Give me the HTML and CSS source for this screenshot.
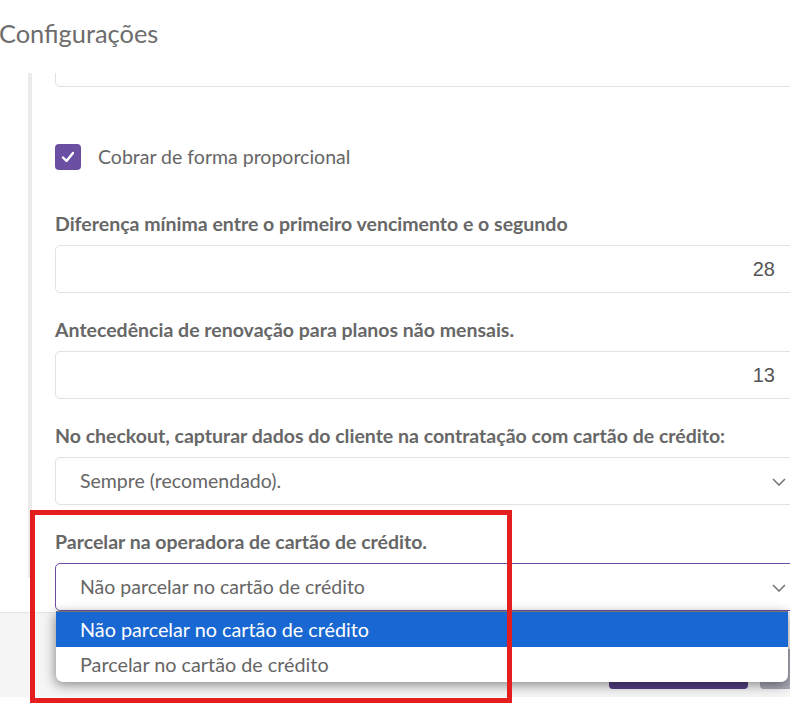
FILE: index.html
```html
<!DOCTYPE html>
<html lang="pt-BR">
<head>
    <meta charset="UTF-8">
    <meta name="viewport" content="width=device-width, initial-scale=1.0">
    <title>Configurações</title>
    <link rel="stylesheet" href="styles.css">
</head>
<body>
    <div id="header">
        <h2>Configurações</h2>
    </div>

    <div id="scroll-area">
        <div id="panel">
            <div class="field field-cut">
                <div class="input"></div>
            </div>

            <label class="check-row">
                <span class="checkbox">
                    <svg width="14" height="12" viewBox="0 0 14 12"><path d="M2 6.5 L5.5 10 L12 2" fill="none" stroke="#fff" stroke-width="2.4" stroke-linecap="round" stroke-linejoin="round"/></svg>
                </span>
                Cobrar de forma proporcional
            </label>

            <div class="field">
                <div class="label">Diferença mínima entre o primeiro vencimento e o segundo</div>
                <div class="input input-number">28</div>
            </div>

            <div class="field">
                <div class="label">Antecedência de renovação para planos não mensais.</div>
                <div class="input input-number">13</div>
            </div>

            <div class="field">
                <div class="label">No checkout, capturar dados do cliente na contratação com cartão de crédito:</div>
                <div class="input select">
                    Sempre (recomendado).
                    <svg class="chevron" width="14" height="8" viewBox="0 0 14 8"><path d="M1 1 L7 7 L13 1" fill="none" stroke="#777" stroke-width="1.6"/></svg>
                </div>
            </div>

            <div class="field">
                <div class="label">Parcelar na operadora de cartão de crédito.</div>
                <div class="input select focused">
                    Não parcelar no cartão de crédito
                    <svg class="chevron" width="14" height="8" viewBox="0 0 14 8"><path d="M1 1 L7 7 L13 1" fill="none" stroke="#777" stroke-width="1.6"/></svg>
                </div>
            </div>
        </div>
    </div>

    <div id="footer">
        <span class="btn btn-primary"></span>
        <span class="btn btn-gray"></span>
    </div>

    <!-- lista aberta do select -->
    <div id="dropdown">
        <div class="option selected">Não parcelar no cartão de crédito</div>
        <div class="option">Parcelar no cartão de crédito</div>
    </div>

    <!-- destaque vermelho -->
    <div id="highlight"></div>
</body>
</html>
```

FILE: styles.css
```css
body {
    margin: 0;
    padding: 0;
    background: #fff;
    font-family: Lato, "Open Sans", sans-serif;
    color: #666;
    width: 790px;
    height: 703px;
    overflow: hidden;
    position: relative;
}
#header {
    height: 73px;
    box-sizing: border-box;
    padding-top: 18px;
}
#header h2 {
    margin: 0 0 0 -1px;
    font-size: 25.4px;
    font-weight: 400;
    line-height: 31px;
    color: #6d6d6d;
}
#scroll-area {
    height: 539px;
    overflow: hidden;
    padding-left: 28px;
}
#panel {
    border-left: 4px solid #ebebeb;
    padding-left: 23px;
    width: 747px;
    height: 100%;
}
.field {
    margin-bottom: 26px;
}
.field-cut {
    margin-top: -34px;
    margin-bottom: 57px;
}
.label {
    font-size: 19.5px;
    font-weight: 700;
    line-height: 22px;
    margin-bottom: 10px;
    color: #676767;
    white-space: nowrap;
}
.input {
    height: 48px;
    box-sizing: border-box;
    border: 1px solid #e2e2e2;
    border-radius: 5px;
    background: #fff;
    font-size: 19.5px;
    line-height: 46px;
    padding: 0 24px;
    color: #666;
    position: relative;
    white-space: nowrap;
}
.input-number {
    text-align: right;
    padding-right: 26px;
    font-family: "Liberation Sans", Arial, sans-serif;
    font-size: 20px;
    color: #555;
}
.select .chevron {
    position: absolute;
    right: 15px;
    top: 20px;
}
.focused {
    border-color: #6b4fa5;
}
.check-row {
    display: flex;
    align-items: center;
    gap: 17px;
    font-size: 19.5px;
    line-height: 26px;
    margin-bottom: 43px;
    color: #666;
}
.checkbox {
    width: 26px;
    height: 26px;
    border-radius: 4px;
    background: #6b4fa3;
    display: flex;
    align-items: center;
    justify-content: center;
}
#footer {
    height: 85px;
    width: 860px;
    box-sizing: border-box;
    background: #f5f5f5;
    border-top: 1px solid #e6e6e6;
    display: flex;
    justify-content: flex-end;
    align-items: flex-end;
    gap: 12px;
    padding-bottom: 8px;
}
.btn {
    height: 40px;
    border-radius: 4px;
}
.btn-primary {
    width: 139px;
    background: #553f85;
}
.btn-gray {
    width: 100px;
    background: #a7a9b6;
}
#dropdown {
    position: absolute;
    left: 56px;
    top: 611px;
    width: 732px;
    background: #fff;
    border-top: 1px solid #777;
    border-radius: 0 0 7px 7px;
    box-shadow: -1px 3px 12px rgba(0, 0, 0, 0.45);
    overflow: hidden;
    z-index: 2;
}
.option {
    height: 35px;
    line-height: 35px;
    padding-left: 24px;
    font-size: 19.8px;
    color: #666;
}
.option.selected {
    background: #1967d2;
    color: #fff;
}
#highlight {
    position: absolute;
    left: 30px;
    top: 510px;
    width: 482px;
    height: 193px;
    box-sizing: border-box;
    border: 5px solid #e41e1e;
    z-index: 3;
}
```
